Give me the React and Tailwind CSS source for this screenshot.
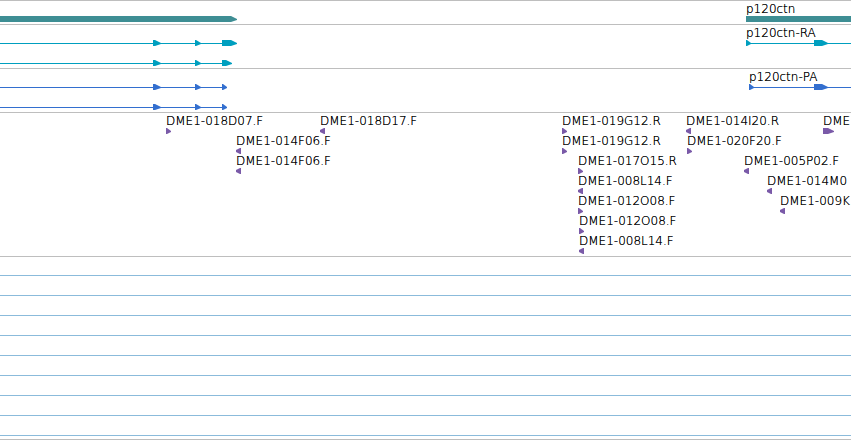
// All x positions are canvas units of the genome view, 1 unit = 1px
const HEAD = 5;
const VIEW_END = 4000;

const geneRows = [
    [
        { start: 0, end: 237, parts: [{ from: 0, to: 237, dir: "right" }] },
        { name: "p120ctn", start: 746, end: VIEW_END, parts: [{ from: 746, to: VIEW_END, dir: "right" }] },
    ],
];

const transcriptRows = [
    [
        {
            start: 0,
            end: 237,
            line: true,
            parts: [
                { from: 153, to: 161, dir: "right" },
                { from: 195, to: 201, dir: "right" },
                { from: 222, to: 237, dir: "right" },
            ],
        },
        {
            name: "p120ctn-RA",
            start: 746,
            end: VIEW_END,
            line: true,
            parts: [
                { from: 746, to: 751, dir: "right" },
                { from: 814, to: 828, dir: "right" },
            ],
        },
    ],
    [
        {
            start: 0,
            end: 232,
            line: true,
            parts: [
                { from: 153, to: 161, dir: "right" },
                { from: 195, to: 201, dir: "right" },
                { from: 222, to: 232, dir: "right" },
            ],
        },
    ],
];

const proteinRows = [
    [
        {
            start: 0,
            end: 227,
            line: true,
            parts: [
                { from: 153, to: 161, dir: "right" },
                { from: 195, to: 201, dir: "right" },
                { from: 222, to: 227, dir: "right" },
            ],
        },
        {
            name: "p120ctn-PA",
            start: 749,
            end: VIEW_END,
            line: true,
            parts: [
                { from: 749, to: 754, dir: "right" },
                { from: 814, to: 828, dir: "right" },
            ],
        },
    ],
    [
        {
            start: 0,
            end: 227,
            line: true,
            parts: [
                { from: 153, to: 161, dir: "right" },
                { from: 195, to: 201, dir: "right" },
                { from: 222, to: 227, dir: "right" },
            ],
        },
    ],
];

const marker = (name, start, dir, width = HEAD) => ({
    name,
    start,
    end: start + width,
    parts: [{ from: start, to: start + width, dir }],
});

const markerRows = [
    [
        marker("DME1-018D07.F", 166, "right"),
        marker("DME1-018D17.F", 320, "left"),
        marker("DME1-019G12.R", 562, "right"),
        marker("DME1-014I20.R", 686, "left"),
        marker("DME", 823, "right", 11),
    ],
    [
        marker("DME1-014F06.F", 236, "left"),
        marker("DME1-019G12.R", 562, "right"),
        marker("DME1-020F20.F", 687, "right"),
    ],
    [
        marker("DME1-014F06.F", 236, "left"),
        marker("DME1-017O15.R", 578, "right"),
        marker("DME1-005P02.F", 744, "left"),
    ],
    [marker("DME1-008L14.F", 578, "left"), marker("DME1-014M0", 767, "left")],
    [marker("DME1-012O08.F", 578, "right"), marker("DME1-009K", 780, "left")],
    [marker("DME1-012O08.F", 579, "right")],
    [marker("DME1-008L14.F", 579, "left")],
];

const emptyRows = [1, 2, 3, 4, 5, 6, 7, 8, 9];

// Box with an arrow head whose tip is one pixel high and sits on the intron line
const arrowPoints = (from, to, dir) => {
    if (dir === "left") {
        const neck = from + HEAD - 1;
        return `${to},0 ${neck},0 ${from},2 ${from},4 ${neck},6 ${to},6`;
    }
    const neck = Math.max(from + 1, to - HEAD - 1);
    return `${from},0 ${neck},0 ${to},3 ${to},4 ${neck},6 ${from},6`;
};

const Feature = ({ feature }) => {
    const { name, start, end, line, parts } = feature;
    const width = end - start;

    return (
        <div className="absolute top-0" style={{ left: start }}>
            <div className="h-3 text-xs leading-[10px] font-extralight text-black whitespace-nowrap [text-shadow:0_0_0_#000]">
                {name}
            </div>
            <svg width={width} height="6" className="block fill-current" aria-hidden="true">
                {line && <rect x="0" y="3" width={width - 1} height="1" />}
                {parts.map((part) => (
                    <polygon
                        key={part.from}
                        points={arrowPoints(part.from - start, part.to - start, part.dir)}
                    />
                ))}
            </svg>
        </div>
    );
};

const Track = ({ rows, className }) => (
    <section className={`border-t border-[#bebebe] pt-[3px] ${className}`}>
        {rows.map((row, index) => (
            <div key={index} className="relative h-5">
                {row.map((feature) => (
                    <Feature key={feature.start} feature={feature} />
                ))}
            </div>
        ))}
    </section>
);

const App = () => {
    return (
        <main className="bg-white overflow-hidden font-['DejaVu_Sans',sans-serif]">
            <Track rows={geneRows} className="text-[#3e8e94]" />
            <Track rows={transcriptRows} className="text-[#009fbf]" />
            <Track rows={proteinRows} className="text-[#336fcf]" />
            <Track rows={markerRows} className="text-[#7a5aa8]" />

            {/* Tracks with no features in this range */}
            <section className="border-y border-[#bebebe] pt-[18px]">
                {emptyRows.map((row) => (
                    <div key={row} className="h-5 border-t border-[#8bbbdb] last:h-1" />
                ))}
            </section>
        </main>
    );
};

export default App;
